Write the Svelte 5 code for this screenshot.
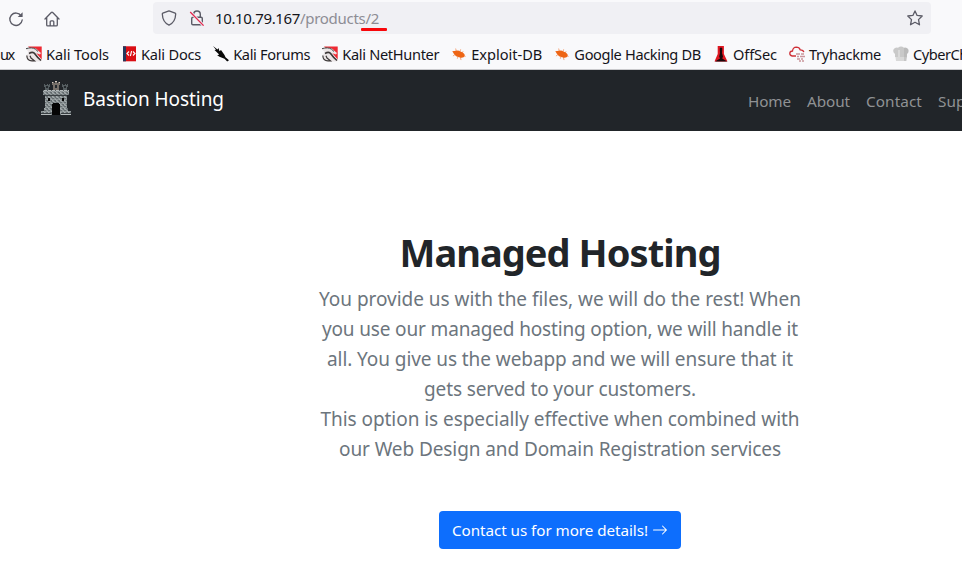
<script>
  const bookmarks = [
    { icon: 'dragon', label: 'Kali Tools', w: 63 },
    { icon: 'docs', label: 'Kali Docs', w: 60 },
    { icon: 'forum', label: 'Kali Forums', w: 77 },
    { icon: 'dragon', label: 'Kali NetHunter', w: 97 },
    { icon: 'bug', label: 'Exploit-DB', w: 71 },
    { icon: 'bug', label: 'Google Hacking DB', w: 126.5 },
    { icon: 'offsec', label: 'OffSec', w: 44 },
    { icon: 'cloud', label: 'Tryhackme', w: 72 },
    { icon: 'chef', label: 'CyberChef', w: 67 }
  ];
  const links = [
    { label: 'Home', w: 43 },
    { label: 'About', w: 43 },
    { label: 'Contact', w: 56 },
    { label: 'Support', w: 58 }
  ];
  const lines = [
    { text: 'You provide us with the files, we will do the rest! When', w: 482 },
    { text: 'you use our managed hosting option, we will handle it', w: 476 },
    { text: 'all. You give us the webapp and we will ensure that it', w: 466 },
    { text: 'gets served to your customers.', w: 272 },
    { text: 'This option is especially effective when combined with', w: 479 },
    { text: 'our Web Design and Domain Registration services', w: 442 }
  ];

  // Tracks a run of text so that it fills the given width.
  function fit(node, width) {
    const natural = node.getBoundingClientRect().width;
    const n = node.textContent.length;
    node.style.letterSpacing = `${(width - natural) / n}px`;
  }
</script>

<div class="window">
  <div class="toolbar">
    <div class="buttons">
      <svg width="16" height="16" viewBox="0 0 16 16" fill="none" stroke="#5b5b66" stroke-width="1.35" stroke-linecap="round">
        <path d="M13.2 4.8A6.2 6.2 0 1 0 14.2 9" />
        <path d="M14.6 1.2v4.9H9.7z" fill="#5b5b66" stroke="none" />
      </svg>
      <svg width="16" height="16" viewBox="0 0 16 16" fill="none" stroke="#5b5b66" stroke-width="1.3" stroke-linejoin="round" stroke-linecap="round">
        <path d="M1 8 7.3 1.5a1 1 0 0 1 1.4 0L15 8M2.7 6.8v7.1q0 1 1 1h8.6q1 0 1-1V6.8M6.2 14.8v-4q0-1 1-1h1.6q1 0 1 1v4" />
      </svg>
    </div>
    <div class="urlbar">
      <svg width="16" height="16" viewBox="0 0 16 16" fill="none" stroke="#5b5b66" stroke-width="1.3" stroke-linejoin="round">
        <path d="M8 .9 14.2 3.1q.6.3.5 1C14.5 9.5 12.5 13.2 8 15.2 3.5 13.2 1.5 9.5 1.3 4.1q-.1-.7.5-1z" />
      </svg>
      <svg class="lock" width="16" height="16" viewBox="0 0 16 16" fill="none" stroke="#5b5b66" stroke-width="1.4">
        <path d="M4.7 7V4.3a3.3 3.3 0 0 1 6.6 0V7" />
        <rect x="2.7" y="7.2" width="10.6" height="7.5" rx="1.3" />
        <path d="M1.2 2 14.6 15.6" stroke="#f0f0f4" stroke-width="3" />
        <path d="M1.2 2 14.6 15.6" stroke="#e22850" stroke-width="1.3" />
      </svg>
      <div class="address">
        <span class="host" use:fit={85}>10.10.79.167</span><span class="path" use:fit={79}>/products/2</span>
        <i class="mark"></i>
      </div>
      <svg width="16" height="16" viewBox="0 0 16 16" fill="none" stroke="#5b5b66" stroke-width="1.3" stroke-linejoin="round">
        <path d="M8 .9 10.1 5.4 15.2 6 11.5 9.6 12.5 14.8 8 12.3 3.5 14.8 4.5 9.6.8 6 5.9 5.4z" />
      </svg>
    </div>
  </div>

  <div class="bookmarks">
    <span class="cut" use:fit={13.5}>ux</span>
    {#each bookmarks as b}
      <div class="bookmark">
        <svg width="16" height="16" viewBox="0 0 16 16">
          {#if b.icon === 'dragon'}
            <path d="M2 .5h13.700v13L11 8z" fill="#ee2a33" />
            <path d="M0 3 5 1.800Q10 1.500 12 4.500L15 7l-1 1.500-3-1L9.500 8q4 2.500 6 6.500l-1 1H4L1.500 13 .5 9 3 6.500z" fill="#ebe6e7" />
            <path d="M0 2.700Q6 .8 9.500 3.200L12 5.500" fill="none" stroke="#454545" stroke-width="1" />
            <path d="M3 7.500Q7 5 9 8T15 14.500" fill="none" stroke="#3c3838" stroke-width="1.600" />
            <path d="M.8 9.500Q1 14.800 6 14.800h2.500L5 12 4 9.800" fill="none" stroke="#3c3838" stroke-width="1.200" />
          {:else if b.icon === 'docs'}
            <rect x="2" y=".3" width="13" height="15" fill="#da0e14" />
            <rect x="2" y=".3" width="3" height="15" fill="#25385c" />
            <path d="m8 5.500-2 2 2 2m4-4 2 2-2 2m-1.400-4.500-1.200 5" fill="none" stroke="#fff" stroke-width="1.1" />
          {:else if b.icon === 'forum'}
            <path d="M0 0 4.500 3.500 5.500 2 6.500 5.200 8 4 11.500 9l1 2.300 3.500 3-1.800 1.200-2.700-2.800-5-2-2.300-1.400 2-.7L1.500 4 3 3.700z" fill="#080808" />
          {:else if b.icon === 'bug'}
            <g transform="rotate(20 8 8)">
              <path d="m3 4 2 3m3-4v3m3-2-1 3M3 12l2-3m3 4v-3m4 3-2-3M1 8h3m9 0h2" stroke="#f4a77c" stroke-width=".9" />
              <path d="M1 7.500 4 6l2-1 5 .2q3 .8 3 2.800t-3 2.800L6 11 3 9.500z" fill="#ee6514" />
            </g>
          {:else if b.icon === 'offsec'}
            <path d="M4.700 0h6.200v8l3.600 7.500H1.500L4.700 8z" fill="#df1721" />
            <path d="M6.700 2.500q1.300-2 2.600 0L9 7l1 3.500-.8 2 5 3H2l5-3-.8-2L7 7z" fill="#18070a" />
          {:else if b.icon === 'cloud'}
            <path d="M7 10H3.200Q.7 9.500.8 7.300T3.500 5Q4 1.300 7.300 1.200q3 .1 4 2.700 3 0 3.500 2.300" fill="none" stroke="#cf3037" stroke-width="1.300" />
            <path d="M7 8h4m1 0h3m-7 2.500h2m1 0h5M8 13h3m1 0h2m-4 2h2m1 0h2" stroke="#c9959b" stroke-width="1.300" />
          {:else}
            <path d="M2 11V8Q-.5 6 .5 3.500 2 1 5 1.700q3-2.200 6 0 3-.6 4.300 1.800.8 2.700-1.300 4.500v3.500z" fill="#c9c9c9" />
            <path d="M2.500 11h11.300l-.6 4H3z" fill="#d9d9d9" />
            <path d="M6 4v7" stroke="#d9d9d9" stroke-width="2" />
            <path d="M11 2q3-.7 4.300 1.500.8 2.700-1.300 4.500l-.6 7H11z" fill="#a8a8a8" opacity=".4" />
          {/if}
        </svg>
        <span class="slot" style:width="{b.w}px"><span use:fit={b.w}>{b.label}</span></span>
      </div>
    {/each}
  </div>

  <nav>
    <div class="brand">
      <svg width="32" height="36" viewBox="0 0 32 36" shape-rendering="crispEdges">
        <defs>
          <pattern id="stone" width="4" height="4" patternUnits="userSpaceOnUse">
            <path fill="#8c9496" d="M0 0h4v4H0z" />
            <path fill="#666e71" d="M0 1h2v1H0zM3 0h1v1H3zM2 3h2v1H2z" />
            <path fill="#a6adae" d="M1 0h1v1H1zM0 3h1v1H0zM3 2h1v1H3z" />
          </pattern>
        </defs>
        <path d="M12 1h2v1h1V0h2v2h1V1h2v3h-1v5h-6V4h-1z" fill="#777069" />
        <path d="M12 1h1v1h-1zM15 0h2v1h-2zM19 1h1v1h-1z" fill="#d4cac0" />
        <path d="M4 3h1v1h2V3h1v1h1V3h1v3H9v3H5V6H4zM22 3h1v1h2V3h1v1h1V3h1v3h-1v3h-4V6h-1z" fill="#555e61" />
        <path d="M15 4h2v3h-2zM6 5h2v2H6zM24 5h2v2h-2z" fill="#24292d" />
        <path d="M3 9h26v5h-2v13h1v3h3v4H1v-4h3v-3h1V14H3z" fill="url(#stone)" />
        <path d="M3 9h26v1H3zM1 33h10v1H1zM21 33h10v1H21z" fill="#b4babb" />
        <path d="M5 14h22v1H5zM1 32h10v1H1zM21 32h10v1H21z" fill="#3a4043" />
        <path d="M3 9h1v1H3zM7 9h1v1H7zM11 9h1v1h-1zM15 9h1v1h-1zM19 9h1v1h-1zM23 9h1v1h-1zM27 9h1v1h-1z" fill="#596164" />
        <path d="M8 17h2v3H8zM22 17h2v3h-2zM12 34V25q0-3 4-3.500Q20 22 20 25v9z" fill="#050505" />
      </svg>
      <span use:fit={141}>Bastion Hosting</span>
    </div>
    <div class="links">
      {#each links as l}
        <a href="#top"><span class="slot" style:width="{l.w}px"><span use:fit={l.w}>{l.label}</span></span></a>
      {/each}
    </div>
  </nav>

  <main>
    <h1><span use:fit={321}>Managed Hosting</span></h1>
    <p>
      {#each lines as l}
        <span class="line"><span use:fit={l.w}>{l.text}</span></span>
      {/each}
    </p>
    <button>
      <span use:fit={196}>Contact us for more details!</span>
      <svg width="16" height="16" viewBox="0 0 16 16" fill="white">
        <path fill-rule="evenodd" d="M1 8a.5.5 0 0 1 .5-.5h11.793l-3.147-3.146a.5.5 0 0 1 .708-.708l4 4a.5.5 0 0 1 0 .708l-4 4a.5.5 0 0 1-.708-.708L13.293 8.500H1.500A.5.5 0 0 1 1 8z" />
      </svg>
    </button>
  </main>
</div>

<style>
  :global(body) { margin: 0; overflow: hidden; background: #fff; }
  .window { width: 962px; height: 567px; overflow: hidden; font-family: "Noto Sans", "Open Sans", sans-serif; white-space: nowrap; display: flex; flex-direction: column; }
  svg { display: block; flex: none; }
  .slot { display: inline-block; }
  .toolbar { height: 36px; flex: none; background: #f9f9fb; display: flex; align-items: center; box-sizing: border-box; padding-left: 8px; }
  .buttons { display: flex; gap: 20px; width: 145px; padding-top: 1px; }
  .urlbar { width: 778px; height: 32px; background: #f0f0f4; border-radius: 4px; display: flex; align-items: center; box-sizing: border-box; padding: 0 8px; }
  .lock { margin-left: 12px; }
  .address { position: relative; flex: 1; margin-left: 10px; font-size: 15px; line-height: 32px; height: 32px; color: #15141a; display: flex; }
  .path { color: #8d8d94; }
  .mark { position: absolute; left: 146px; top: 26px; width: 26px; height: 3px; border-radius: 1px; background: #f8070b; }
  .bookmarks { height: 34px; flex: none; box-sizing: border-box; border-bottom: 1px solid #c9c9cc; padding-top: 2px; background: #f9f9fb; display: flex; align-items: center; gap: 11.7px; font-size: 14.6px; color: #15141a; }
  .cut { margin-right: .4px; }
  .bookmark { display: flex; align-items: center; gap: 4.4px; }
  nav { height: 61px; flex: none; background: #212529; box-sizing: border-box; padding-left: 40px; display: flex; align-items: center; }
  .brand { display: flex; align-items: center; width: 708px; flex: none; color: #fff; font-size: 19px; gap: 11px; height: 60px; padding-bottom: 4px; box-sizing: border-box; }
  .links { display: flex; gap: 16px; }
  .links a { color: #909294; text-decoration: none; font-size: 15.3px; }
  main { margin-left: 158px; width: 804px; padding-top: 97px; display: flex; flex-direction: column; align-items: center; }
  h1 { margin: 0 0 8px; font-size: 38px; line-height: 48px; font-weight: 700; color: #212529; }
  p { margin: 0 0 47px; font-size: 19px; line-height: 30px; color: #6c757d; display: flex; flex-direction: column; align-items: center; }
  button { width: 242px; height: 38px; border: 0; border-radius: 4px; padding: 0 13px; background: #0d6efd; color: #fff; font: 15.2px "Noto Sans", "Open Sans", sans-serif; display: flex; align-items: center; gap: 4px; }
</style>
